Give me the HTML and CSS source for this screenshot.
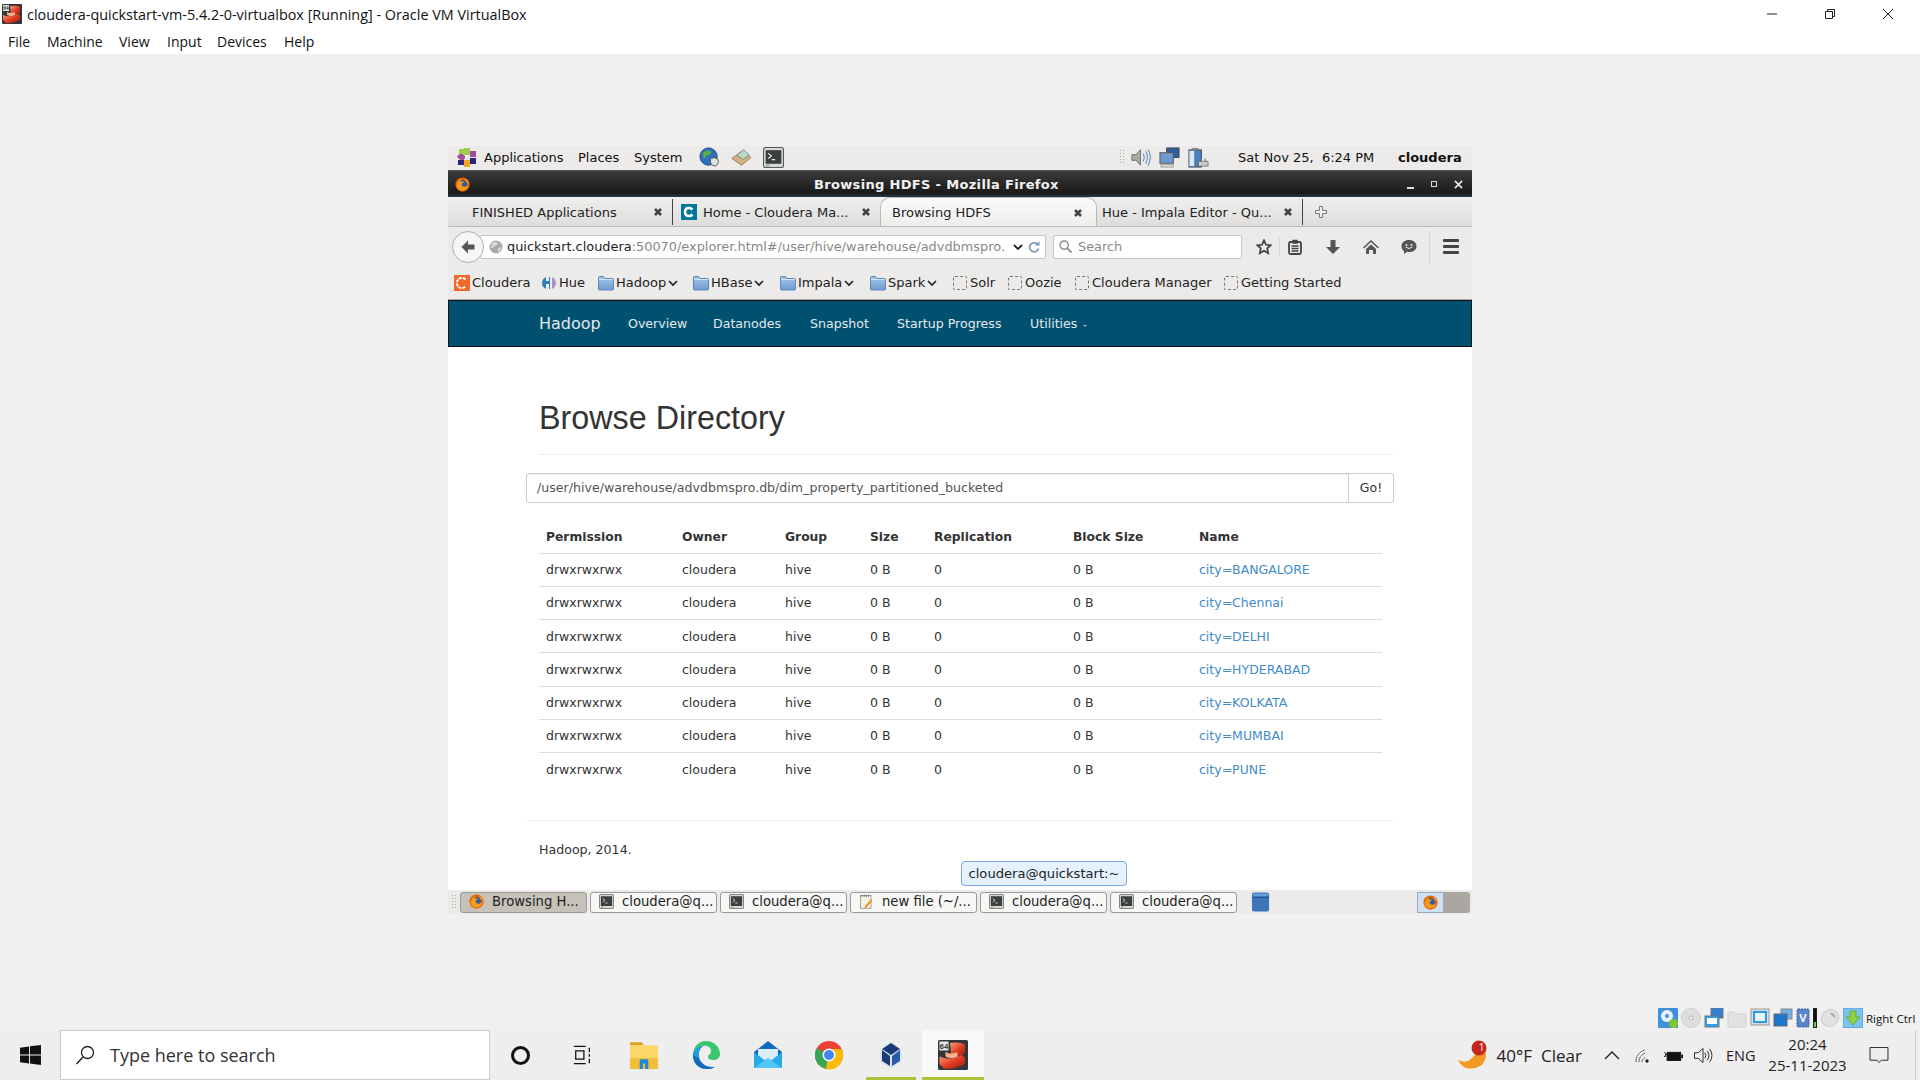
FILE: index.html
```html
<!DOCTYPE html>
<html lang="en">
<head>
<meta charset="utf-8">
<title>cloudera-quickstart-vm-5.4.2-0-virtualbox [Running] - Oracle VM VirtualBox</title>
<link rel="stylesheet" href="styles.css">
</head>
<body>
<svg class="defs" width="0" height="0" aria-hidden="true">
  <defs>
    <linearGradient id="fold" x1="0" y1="0" x2="0" y2="1"><stop offset="0" stop-color="#a8c6e8"/><stop offset="1" stop-color="#6f9cd0"/></linearGradient>
    <linearGradient id="vbred" x1="0" y1="0" x2="1" y2="1"><stop offset="0" stop-color="#f9a07a"/><stop offset=".55" stop-color="#e03a1e"/><stop offset="1" stop-color="#8e1f12"/></linearGradient>
    <symbol id="i-vbox" viewBox="0 0 20 20">
      <rect width="20" height="20" rx="1" fill="#33363b"/>
      <rect x="1" y="1" width="6" height="6" fill="#e8e8e8"/>
      <text x="4" y="6" font-size="5" font-weight="700" text-anchor="middle" fill="#333" font-family="Liberation Sans">64</text>
      <path d="M8 2q7-1 10 1v6q-4 3-9 2z" fill="url(#vbred)"/>
      <path d="M1 11q7 3 15-1l2 2v4q-7 4-14 3l-3-3z" fill="url(#vbred)"/>
      <path d="M5 8q4 2 8 0v3q-4 2-8 0z" fill="#ffb08c"/>
    </symbol>
    <symbol id="i-fx" viewBox="0 0 20 20">
      <circle cx="10" cy="10" r="9.5" fill="#e66000"/>
      <circle cx="10.5" cy="9.5" r="5.5" fill="#2d5fa6"/>
      <path d="M2 12q1-8 7-10-3 3-2 4 3-1 6 1-4 0-4 3 0 3 4 3 3 0 5-3-1 8-8 8-6 0-8-6z" fill="#f59a1b"/>
      <path d="M13 2q5 3 5.500 8-1-3-3-4z" fill="#ffcb3d"/>
    </symbol>
    <symbol id="i-term" viewBox="0 0 20 20">
      <rect x=".5" y=".5" width="19" height="19" rx="2" fill="#d8d8d4" stroke="#55585a"/>
      <rect x="2.500" y="3" width="15" height="13" fill="#3a3f40"/>
      <path d="M5 6l3 2.500-3 2.500M8.500 12h3" fill="none" stroke="#fff" stroke-width="1"/>
      <rect x="3" y="17" width="3" height="1.500" fill="#6cc04a"/>
    </symbol>
    <symbol id="i-folder" viewBox="0 0 16 16">
      <path d="M.5 14V2.500q0-1 1-1h4l1.500 2h7.500q1 0 1 1V14q0 1-1 1h-13q-1 0-1-1z" fill="url(#fold)" stroke="#5a87b8"/>
      <path d="M1 4.500h14" stroke="#d5e4f5"/>
    </symbol>
    <symbol id="i-x" viewBox="0 0 10 10">
      <path d="M2 2l6 6M8 2l-6 6" stroke="#444" stroke-width="2.600" fill="none"/>
    </symbol>
    <symbol id="i-chev" viewBox="0 0 10 10">
      <path d="M1 3l4 4 4-4" stroke="#222" stroke-width="1.700" fill="none"/>
    </symbol>
  </defs>
</svg>

<div class="app">
  <header class="titlebar">
    <svg class="app-icon" viewBox="0 0 20 20"><use href="#i-vbox"/></svg>
    <span class="title-text">cloudera-quickstart-vm-5.4.2-0-virtualbox [Running] - Oracle VM VirtualBox</span>
    <div class="win-ctrls">
      <svg class="wc" viewBox="0 0 12 12"><path d="M1 6h10" stroke="#222" fill="none"/></svg>
      <svg class="wc" viewBox="0 0 12 12"><path d="M1.500 3.500h7v7h-7zM3.500 3.500v-2h7v7h-2" stroke="#222" fill="none"/></svg>
      <svg class="wc" viewBox="0 0 12 12"><path d="M1 1l10 10M11 1L1 11" stroke="#222" fill="none"/></svg>
    </div>
  </header>
  <nav class="menubar">
    <span class="m-file">File</span><span class="m-machine">Machine</span><span class="m-view">View</span><span class="m-input">Input</span><span class="m-devices">Devices</span><span>Help</span>
  </nav>

  <main class="stage">
    <div class="vm">
      <div class="panel">
        <svg class="centos" viewBox="0 0 22 22">
          <rect x="2" y="8" width="7" height="6" fill="#a24e98" transform="rotate(45 5.500 11)"/>
          <rect x="8" y="2" width="6" height="7" fill="#9fcc4f"/>
          <rect x="14" y="5" width="6" height="6" fill="#a04e9a"/>
          <rect x="14" y="12" width="6" height="6" fill="#262577"/>
          <rect x="8" y="14" width="6" height="7" fill="#efa724"/>
          <rect x="3" y="3" width="5" height="5" fill="#9fcc4f"/>
          <rect x="2" y="14" width="6" height="5" fill="#262577"/>
          <rect x="9" y="9" width="4" height="4" fill="#eee"/>
        </svg>
        <span class="p-apps">Applications</span><span class="p-places">Places</span><span class="p-sys">System</span>
        <svg class="p-ic p-earth" viewBox="0 0 22 22"><circle cx="10" cy="10" r="9" fill="#2f6fc0" stroke="#1d3f78"/><path d="M4 6q5-4 9-1-1 4-5 4-1 3-3 3z" fill="#5fae3c"/><path d="M12 12q5-2 8 1 1 5-3 7-4 0-5-4z" fill="#dfe3e6" stroke="#555"/></svg>
        <svg class="p-ic p-mail" viewBox="0 0 22 22"><path d="M1 12L12 4l9 7-10 8z" fill="#d8b184" stroke="#86663f" stroke-width=".8"/><path d="M6 9l7-6 6 5-6 5z" fill="#bcd9c4" stroke="#5b7d8f" stroke-width=".8"/></svg>
        <svg class="p-ic p-term" viewBox="0 0 20 20"><use href="#i-term"/></svg>
        <span class="p-handle"></span>
        <svg class="p-ic p-spk" viewBox="0 0 22 22"><path d="M2 8h4l5-5v16l-5-5H2z" fill="#a9a9a4" stroke="#5d5d5a" stroke-width=".8"/><path d="M14 7q2 4 0 8M16.500 4.500q3.500 6.500 0 13M19 2.500q4.500 8.500 0 17" fill="none" stroke="#4b79b8" stroke-width="1"/></svg>
        <svg class="p-ic p-net" viewBox="0 0 22 22"><rect x="8" y="1" width="13" height="10" fill="#2f5f9e" stroke="#444"/><rect x="1" y="6" width="14" height="11" fill="#6d9bd0" stroke="#555"/><rect x="2" y="18" width="13" height="3" fill="#d8d8d4" stroke="#777" stroke-width=".6"/></svg>
        <svg class="p-ic p-bat" viewBox="0 0 22 22"><rect x="1" y="3" width="13" height="18" fill="#4a7fbd" stroke="#3d4c60"/><rect x="4" y="1" width="7" height="2" fill="#888"/><rect x="1.500" y="4" width="5" height="16" fill="#dbe8f5"/><path d="M11 15h10v5H11z" fill="#c9c9c5" stroke="#666" stroke-width=".8"/><path d="M14 12v3M18 12v3" stroke="#666"/></svg>
        <span class="p-date">Sat Nov 25,&nbsp; 6:24 PM</span>
        <b class="p-user">cloudera</b>
      </div>

      <div class="wm-title">
        <svg class="wm-fx" viewBox="0 0 20 20"><use href="#i-fx"/></svg>
        <span class="wm-text">Browsing HDFS - Mozilla Firefox</span>
        <span class="wm-min"></span><span class="wm-max"></span>
        <svg class="wm-close" viewBox="0 0 10 10"><path d="M1 1l8 8M9 1L1 9" stroke="#e8e8e8" stroke-width="1.800" fill="none"/></svg>
      </div>

      <div class="tabs">
        <div class="tab t1"><span class="tab-label">FINISHED Applications</span><svg class="tab-x" viewBox="0 0 10 10"><use href="#i-x"/></svg></div>
        <div class="tab t2">
          <svg class="tab-c" viewBox="0 0 16 16"><rect width="16" height="16" fill="#00789b"/><path d="M11.500 5.500Q10 4 8 4 4 4 4 8t4 4q2 0 3.500-1.500" fill="none" stroke="#fff" stroke-width="2.500"/></svg>
          <span class="tab-label">Home - Cloudera Ma...</span><svg class="tab-x" viewBox="0 0 10 10"><use href="#i-x"/></svg>
        </div>
        <div class="tab t3"><span class="tab-label">Browsing HDFS</span><svg class="tab-x" viewBox="0 0 10 10"><use href="#i-x"/></svg></div>
        <div class="tab t4"><span class="tab-label">Hue - Impala Editor - Qu...</span><svg class="tab-x" viewBox="0 0 10 10"><use href="#i-x"/></svg></div>
        <svg class="tab-plus" viewBox="0 0 12 12"><path d="M4.500.5h3v4h4v3h-4v4h-3v-4h-4v-3h4z" fill="#f2f2f0" stroke="#777"/></svg>
      </div>

      <div class="urlbar">
        <div class="back"><svg viewBox="0 0 16 16"><path d="M8 1.500L1.500 8 8 14.500V10.500h6.500v-5H8z" fill="#555"/></svg></div>
        <div class="url-box">
          <svg class="globe" viewBox="0 0 14 14"><circle cx="7" cy="7" r="6.500" fill="#a8a8a8"/><path d="M3 3q3-2 6 0-1 3-4 3-1 3-3 2zM9 8l3-1q0 4-3 5z" fill="#d9d9d9"/></svg>
          <span class="url-text"><span class="url-host">quickstart.cloudera</span>:50070/explorer.html#/user/hive/warehouse/advdbmspro.</span>
          <svg class="url-drop" viewBox="0 0 10 10"><path d="M1 3l4 4 4-4" stroke="#222" stroke-width="1.800" fill="none"/></svg>
          <svg class="url-reload" viewBox="0 0 12 12"><path d="M10 4A4.500 4.500 0 1 0 10.500 7.500" fill="none" stroke="#7f97b4" stroke-width="1.800"/><path d="M7 4.500h4.500V0z" fill="#7f97b4"/></svg>
        </div>
        <div class="search-box">
          <svg class="s-ic" viewBox="0 0 14 14"><circle cx="5.500" cy="5.500" r="4.500" fill="none" stroke="#8a8a8a" stroke-width="1.500"/><path d="M9 9l4.500 4.500" stroke="#8a8a8a" stroke-width="2"/></svg>
          <span>Search</span>
        </div>
        <svg class="tb tb-star" viewBox="0 0 18 18"><path d="M9 1.500l2.300 5 5.200.6-3.900 3.500 1.100 5.400L9 13.300 4.300 16l1.100-5.400L1.500 7.100l5.200-.6z" fill="none" stroke="#444" stroke-width="2"/></svg>
        <span class="tb-sep"></span>
        <svg class="tb tb-clip" viewBox="0 0 16 16"><rect x="2" y="3" width="12" height="12" rx="1.500" fill="none" stroke="#444" stroke-width="1.800"/><path d="M6 1.500h4V4H6zM4.500 7h7M4.500 9.500h7M4.500 12h7" stroke="#444" stroke-width="1.300" fill="#444"/></svg>
        <svg class="tb tb-down" viewBox="0 0 16 16"><path d="M5.500 1h5v7H15l-7 7-7-7h4.500z" fill="#555"/></svg>
        <svg class="tb tb-home" viewBox="0 0 16 16"><path d="M8 1L0 8.500l1 1L8 3l7 6.500 1-1zM3 10l5-4.500L13 10v5h-3v-4H6v4H3z" fill="#555"/></svg>
        <svg class="tb tb-chat" viewBox="0 0 16 16"><path d="M8 1c4.400 0 7.500 2.700 7.500 6.200S12.400 13 8 13c-.7 0-1.300 0-2-.2L3 15v-3C1.400 11 .5 9.300.5 7.200.5 3.700 3.600 1 8 1z" fill="#555"/><circle cx="5.500" cy="6" r="1" fill="#eee"/><circle cx="10.500" cy="6" r="1" fill="#eee"/><path d="M4.500 8q3.500 3 7 0" stroke="#eee" fill="none"/></svg>
        <span class="tb-sep tb-sep2"></span>
        <div class="hamb"><i></i><i></i><i></i></div>
      </div>

      <div class="bookmarks">
        <span class="bm bm-cl"><svg class="bi" viewBox="0 0 16 16"><rect width="16" height="16" fill="#f2682a"/><path d="M11.500 4.500Q10 3 8 3 3 3 3 8t5 5q2 0 3.500-1.500" fill="none" stroke="#fff" stroke-width="2" stroke-dasharray="3 1"/></svg>Cloudera</span>
        <span class="bm bm-hue"><svg class="bi" viewBox="0 0 16 16"><path d="M1 8q0-4 4-6v4h3V2h1v12H8v-5H5v5q-4-2-4-6z" fill="#2d7cc0"/><path d="M11 2q4 2 4 6t-4 6z" fill="#a894c8"/></svg>Hue</span>
        <span class="bm bm-had"><svg class="bi" viewBox="0 0 16 16"><use href="#i-folder"/></svg>Hadoop<svg class="chev" viewBox="0 0 10 10"><use href="#i-chev"/></svg></span>
        <span class="bm bm-hb"><svg class="bi" viewBox="0 0 16 16"><use href="#i-folder"/></svg>HBase<svg class="chev" viewBox="0 0 10 10"><use href="#i-chev"/></svg></span>
        <span class="bm bm-imp"><svg class="bi" viewBox="0 0 16 16"><use href="#i-folder"/></svg>Impala<svg class="chev" viewBox="0 0 10 10"><use href="#i-chev"/></svg></span>
        <span class="bm bm-sp"><svg class="bi" viewBox="0 0 16 16"><use href="#i-folder"/></svg>Spark<svg class="chev" viewBox="0 0 10 10"><use href="#i-chev"/></svg></span>
        <span class="bm bm-sol"><i class="dash"></i>Solr</span>
        <span class="bm bm-ooz"><i class="dash"></i>Oozie</span>
        <span class="bm bm-cm"><i class="dash"></i>Cloudera Manager</span>
        <span class="bm"><i class="dash"></i>Getting Started</span>
      </div>

      <nav class="hnav">
        <span class="brand">Hadoop</span>
        <span class="nl nl1">Overview</span><span class="nl nl2">Datanodes</span><span class="nl nl3">Snapshot</span><span class="nl nl4">Startup Progress</span><span class="nl">Utilities <i class="caret"></i></span>
      </nav>

      <section class="page">
        <h1 class="h1">Browse Directory</h1>
        <div class="h-rule"></div>
        <div class="path-group">
          <div class="path-input">/user/hive/warehouse/advdbmspro.db/dim_property_partitioned_bucketed</div>
          <div class="go">Go!</div>
        </div>
        <table class="tbl">
          <colgroup><col class="c1"><col class="c2"><col class="c3"><col class="c4"><col class="c5"><col class="c6"><col></colgroup>
          <thead><tr><th>Permission</th><th>Owner</th><th>Group</th><th>Size</th><th>Replication</th><th>Block Size</th><th>Name</th></tr></thead>
          <tbody>
            <tr><td>drwxrwxrwx</td><td>cloudera</td><td>hive</td><td>0 B</td><td>0</td><td>0 B</td><td class="lnk">city=BANGALORE</td></tr>
            <tr><td>drwxrwxrwx</td><td>cloudera</td><td>hive</td><td>0 B</td><td>0</td><td>0 B</td><td class="lnk">city=Chennai</td></tr>
            <tr><td>drwxrwxrwx</td><td>cloudera</td><td>hive</td><td>0 B</td><td>0</td><td>0 B</td><td class="lnk">city=DELHI</td></tr>
            <tr><td>drwxrwxrwx</td><td>cloudera</td><td>hive</td><td>0 B</td><td>0</td><td>0 B</td><td class="lnk">city=HYDERABAD</td></tr>
            <tr><td>drwxrwxrwx</td><td>cloudera</td><td>hive</td><td>0 B</td><td>0</td><td>0 B</td><td class="lnk">city=KOLKATA</td></tr>
            <tr><td>drwxrwxrwx</td><td>cloudera</td><td>hive</td><td>0 B</td><td>0</td><td>0 B</td><td class="lnk">city=MUMBAI</td></tr>
            <tr><td>drwxrwxrwx</td><td>cloudera</td><td>hive</td><td>0 B</td><td>0</td><td>0 B</td><td class="lnk">city=PUNE</td></tr>
          </tbody>
        </table>
        <div class="foot-rule"></div>
        <p class="footer">Hadoop, 2014.</p>
        <div class="tooltip">cloudera@quickstart:~</div>
      </section>

      <div class="vm-task">
        <span class="p-handle h2"></span>
        <div class="vt active"><svg class="vti" viewBox="0 0 20 20"><use href="#i-fx"/></svg><span>Browsing H...</span></div>
        <div class="vt"><svg class="vti" viewBox="0 0 20 20"><use href="#i-term"/></svg><span>cloudera@q...</span></div>
        <div class="vt"><svg class="vti" viewBox="0 0 20 20"><use href="#i-term"/></svg><span>cloudera@q...</span></div>
        <div class="vt"><svg class="vti" viewBox="0 0 20 20"><rect x="2" y="2" width="14" height="17" fill="#f4f1e2" stroke="#888"/><path d="M4 1v3M7 1v3M10 1v3M13 1v3" stroke="#555"/><path d="M8 16l8-9 2 2-8 9-3 1z" fill="#e8932a"/></svg><span>new file (~/...</span></div>
        <div class="vt"><svg class="vti" viewBox="0 0 20 20"><use href="#i-term"/></svg><span>cloudera@q...</span></div>
        <div class="vt"><svg class="vti" viewBox="0 0 20 20"><use href="#i-term"/></svg><span>cloudera@q...</span></div>
        <svg class="trash" viewBox="0 0 20 20"><path d="M1 2q0-2 2-2h14q2 0 2 2v16q0 2-2 2H3q-2 0-2-2z" fill="#3d75bd"/><path d="M1 5h18" stroke="#1f4a85"/><rect x="2" y="1" width="16" height="3" fill="#6b9bd6"/></svg>
        <div class="pager"><div class="pg-on"><svg class="vti" viewBox="0 0 20 20"><use href="#i-fx"/></svg></div></div>
      </div>
    </div>

    <div class="vb-status">
      <svg class="vs" viewBox="0 0 20 20"><rect width="20" height="20" rx="1" fill="#3f8fdc"/><circle cx="9" cy="8" r="6" fill="#e8f2fb"/><circle cx="9" cy="8" r="2" fill="#3f8fdc"/><circle cx="15.500" cy="15.500" r="4.500" fill="#7cc832"/></svg>
      <svg class="vs" viewBox="0 0 20 20"><circle cx="10" cy="10" r="9.500" fill="#dedede" stroke="#cfcfcf"/><circle cx="10" cy="10" r="2" fill="#f4f4f4" stroke="#bbb"/></svg>
      <svg class="vs" viewBox="0 0 20 20"><rect x="7" y="0" width="12" height="10" fill="#2f7fd0" stroke="#777"/><rect x="1" y="8" width="14" height="11" fill="#27a0ee" stroke="#777"/><rect x="3" y="10" width="10" height="6" fill="#fff"/></svg>
      <svg class="vs" viewBox="0 0 20 20"><path d="M1 5q0-1 1-1h5l2 2h9q1 0 1 1v11q0 1-1 1H2q-1 0-1-1z" fill="#e2e2e2" stroke="#d0d0d0"/></svg>
      <svg class="vs" viewBox="0 0 20 20"><rect x="1" y="1" width="18" height="16" fill="#dcdcdc" stroke="#999"/><rect x="3" y="3" width="14" height="12" fill="#2b9ae8"/><rect x="5" y="5" width="10" height="8" fill="#e8f4fd"/></svg>
      <svg class="vs" viewBox="0 0 20 20"><rect x="8" y="1" width="11" height="10" fill="#6fb0e8" stroke="#888"/><rect x="1" y="6" width="13" height="12" fill="#1c78cf" stroke="#666"/></svg>
      <svg class="vs vs-v" viewBox="0 0 14 20"><rect x="1" y="1" width="12" height="18" rx="1" fill="#5a84c8" stroke="#3a5fa0" stroke-dasharray="2 1"/><text x="7" y="14" font-size="11" font-weight="700" fill="#fff" text-anchor="middle" font-family="Liberation Sans">V</text></svg>
      <span class="vs-meter"></span>
      <svg class="vs" viewBox="0 0 20 20"><ellipse cx="10" cy="10" rx="9" ry="8" transform="rotate(-40 10 10)" fill="#e2e2e2" stroke="#c8c8c8"/><path d="M11 5l4 4" stroke="#aaa" stroke-width="2"/></svg>
      <svg class="vs" viewBox="0 0 20 20"><rect width="20" height="20" rx="1" fill="#7cc4f0" stroke="#4b95cf"/><path d="M7 3h6v6h4l-7 8-7-8h4z" fill="#8ed043" stroke="#5d9e22" stroke-width=".7"/></svg>
      <span class="right-ctrl">Right Ctrl</span>
    </div>
  </main>

  <footer class="taskbar">
    <div class="start"><svg class="win" viewBox="0 0 22 21"><path d="M0 3l9.500-1.500V10H0zM10.500 1.300L22 0v10H10.500zM0 11h9.500v8.500L0 18zM10.500 11H22v10l-11.500-1.700z" fill="#111"/></svg></div>
    <div class="ws-search">
      <svg class="ws-mag" viewBox="0 0 20 20"><circle cx="12.500" cy="7.500" r="6" fill="none" stroke="#222" stroke-width="1.300"/><path d="M8 12l-6.500 7" stroke="#222" stroke-width="1.500"/></svg>
      <span>Type here to search</span>
    </div>
    <div class="tk tk-cortana"><span class="cortana"></span></div>
    <div class="tk"><svg class="tk-ic-s" viewBox="0 0 22 22"><path d="M1 1.500h13M1 20.500h13M3 6.500h9v9H3zM18 3v5M18 10v3M18 15v5" fill="none" stroke="#111" stroke-width="1.400"/></svg></div>
    <div class="tk"><svg class="tk-ic" viewBox="0 0 28 28"><path d="M1 2h11l2 3H1z" fill="#e0a020"/><rect x="1" y="5" width="26" height="22" fill="#fad767"/><rect x="1" y="17" width="26" height="10" fill="#f4bd3a"/><path d="M10 27v-9h8v9h-3v-5h-2v5z" fill="#1f88d8"/></svg></div>
    <div class="tk"><svg class="tk-ic" viewBox="0 0 30 30"><path d="M15 1c8 0 14 6 14 13 0 4-3 6-7 6-3 0-5-1-5-3 0-3 3-2 3-6 0-3-3-6-8-5C6 7 3 10 2 14 3 6 8 1 15 1z" fill="#3cc66e"/><path d="M2 14c1-4 4-7 10-8-3 2-5 6-4 11 1 6 7 10 13 10 2 0 3 0 4-1-3 3-6 3-10 3C7 29 1 22 2 14z" fill="#0f6cbd"/><path d="M2 14c1-4 4-7 10-8-3 2-5 6-4 11-.5 1-4 1-6-3z" fill="#1b9de2"/></svg></div>
    <div class="tk"><svg class="tk-ic" viewBox="0 0 30 30"><path d="M15 1l14 11v16H1V12z" fill="#0f6cbd"/><path d="M5 9h20v9l-10 6-10-6z" fill="#d8eefb"/><path d="M1 12l14 11 14-11v16H1z" fill="#28a8ea"/><path d="M1 28l14-10 14 10z" fill="#50c8f5"/></svg></div>
    <div class="tk"><svg class="tk-ic" viewBox="0 0 30 30"><circle cx="15" cy="15" r="14" fill="#ea4335"/><path d="M15 15L3 8a14 14 0 0 0 9 21z" fill="#34a853"/><path d="M15 9h12.500a14 14 0 0 1-15.500 20z" fill="#fbbc05"/><circle cx="15" cy="15" r="6.500" fill="#fff"/><circle cx="15" cy="15" r="5" fill="#4285f4"/></svg></div>
    <div class="tk run"><svg class="tk-ic" viewBox="0 0 30 30"><path d="M15 1l11 8v13l-11 7-11-7V9z" fill="#dfe5ef"/><path d="M15 3l9 6-9 6-9-6z" fill="#1c3c78"/><path d="M6 10l8 6v10l-8-5z" fill="#1c3c78"/><path d="M24 10l-8 6v10l8-5z" fill="#2b5aa8"/></svg></div>
    <div class="tk run open"><svg class="tk-ic" viewBox="0 0 20 20"><use href="#i-vbox"/></svg></div>
    <div class="tray">
      <div class="wx">
        <svg class="wx-ic" viewBox="0 0 30 30"><path d="M0 20q8 4 13-1 5-4 5-9 5 1 9 0 3 8-3 15-8 5-16 3-5-2-8-8z" fill="#f39a23"/><circle cx="21" cy="8" r="7.500" fill="#c4281c"/></svg>
        <span class="wx-n">1</span>
      </div>
      <span class="tmp">40°F</span><span class="clr">Clear</span>
      <svg class="tr-chev" viewBox="0 0 16 9"><path d="M1 8l7-7 7 7" fill="none" stroke="#222" stroke-width="1.300"/></svg>
      <svg class="tr-wifi" viewBox="0 0 16 16"><path d="M1 15q0-9 9-12M4 15q0-6 6-9M7 15q0-3 3-4" fill="none" stroke="#333" stroke-width="1" stroke-dasharray="1.500 .5"/><circle cx="12" cy="14" r="1.700" fill="#222"/></svg>
      <svg class="tr-bat" viewBox="0 0 22 14"><path d="M1 3l2 2v3H1M3 6h2" stroke="#111" fill="none"/><rect x="4.500" y="3.500" width="15" height="9" fill="#111" stroke="#111"/><rect x="20" y="6" width="2" height="4" fill="#111"/></svg>
      <svg class="tr-vol" viewBox="0 0 20 18"><path d="M1 6h4l5-4.500v15L5 12H1z" fill="none" stroke="#222"/><path d="M12 6q2 3 0 6M14.500 4q3.500 5 0 10M17 2q5 7 0 14" fill="none" stroke="#222"/></svg>
      <span class="eng">ENG</span>
      <div class="clock"><span>20:24</span><span>25-11-2023</span></div>
      <svg class="notif" viewBox="0 0 20 18"><path d="M.5.500h19v13.500h-7L10 16.500 8 14H.5z" fill="none" stroke="#222"/></svg>
      <span class="show-desk"></span>
    </div>
  </footer>
</div>
</body>
</html>
```

FILE: styles.css
```css
* { box-sizing: border-box; }
html, body { margin: 0; height: 100%; }
body { background: #f0f0f0; font-family: "Open Sans", sans-serif; overflow: hidden; color: #111; }
.defs { position: absolute; }
svg { display: block; flex: none; }
.app { width: 1920px; height: 1080px; display: flex; flex-direction: column; }

/* VirtualBox window chrome */
.titlebar { height: 29px; background: #fff; display: flex; align-items: center; padding: 0 0 1px 2px; flex: none; }
.app-icon { width: 20px; height: 20px; }
.title-text { margin-left: 5px; font: 14.400px "Open Sans", sans-serif; color: #111; }
.win-ctrls { margin-left: auto; display: flex; gap: 46px; padding-right: 26px; }
.wc { width: 12px; height: 12px; }
.menubar { height: 25px; background: #fff; display: flex; align-items: center; padding-left: 8px; font-size: 14px; flex: none; }
.m-file { width: 39px; } .m-machine { width: 72px; } .m-view { width: 48px; } .m-input { width: 50px; } .m-devices { width: 67px; }

.stage { flex: 1; display: flex; flex-direction: column; align-items: center; padding-top: 92px; min-height: 0; }
.vm { width: 1024px; height: 768px; display: flex; flex-direction: column; font-family: "DejaVu Sans", sans-serif; position: relative; flex: none; }

/* guest panel */
.panel { height: 24px; background: #ecebe9; display: flex; align-items: center; font-size: 13px; color: #111; padding: 0 0 2px 8px; flex: none; }
.centos { width: 22px; height: 22px; }
.p-apps { margin-left: 6px; width: 94px; } .p-places { width: 56px; } .p-sys { width: 65px; }
.p-ic { width: 21px; height: 21px; }
.p-mail { margin-left: 11px; } .p-term { margin-left: 11px; }
.p-handle { width: 5px; height: 16px; margin-left: 335px; margin-right: 6px; background: radial-gradient(circle, #aaa 1px, transparent 1px) 0 0 / 3px 3px; }
.p-net, .p-bat { margin-left: 8px; }
.p-date { margin-left: 29px; width: 160px; }
.p-user { font-weight: 700; }

.wm-title { height: 27px; background: linear-gradient(#3b3b3b, #1a1a1a 85%, #2c3a44); border-top: 1px solid #555; display: flex; align-items: center; padding-left: 7px; color: #f2f2f2; flex: none; }
.wm-fx { width: 15px; height: 15px; }
.wm-text { margin-left: 344px; font-weight: 700; font-size: 13px; width: 593px; letter-spacing: .33px; }
.wm-min { width: 7px; height: 2px; background: #ddd; margin-top: 8px; }
.wm-max { width: 6px; height: 6px; border: 1px solid #ddd; margin-left: 17px; }
.wm-close { width: 9px; height: 9px; margin-left: 17px; }

.tabs { height: 30px; background: linear-gradient(#efefee, #dedddb); border-bottom: 1px solid #b8b8b4; display: flex; align-items: center; font-size: 13px; color: #222; flex: none; }
.tab { height: 29px; display: flex; align-items: center; position: relative; }
.tab-x { width: 10px; height: 10px; position: absolute; right: 9px; top: 10px; }
.t1 { width: 225px; padding: 1px 0 0 24px; border-right: 1px solid #444; height: 26px; }
.t1 .tab-x { top: 8px; }
.t2 { width: 207px; padding: 1px 0 0 8px; }
.tab-c { width: 16px; height: 16px; margin-right: 6px; }
.t3 { width: 217px; padding-left: 11px; background: linear-gradient(#fafafa, #ededec); border: 1px solid #b8b8b4; border-bottom: none; border-radius: 10px 10px 0 0; }
.t3 .tab-x { right: 13px; }
.t4 { width: 206px; padding: 1px 0 0 5px; border-right: 1px solid #444; height: 26px; }
.t4 .tab-x { right: 9px; top: 8px; }
.tab-plus { width: 12px; height: 12px; margin-left: 12px; }

.urlbar { height: 38px; background: #ecebe9; display: flex; align-items: center; padding: 1px 0 0 4px; flex: none; font-size: 12.900px; position: relative; }
.back { width: 32px; height: 32px; border-radius: 50%; background: #f6f6f5; border: 1px solid #b0b0ac; display: flex; align-items: center; justify-content: center; position: relative; z-index: 1; }
.back svg { width: 16px; height: 16px; }
.url-box { margin-left: -4px; width: 566px; height: 24px; background: #fff; border: 1px solid #c5c5c0; border-radius: 2px; display: flex; align-items: center; padding-left: 8px; }
.globe { width: 14px; height: 14px; }
.url-text { margin-left: 4px; color: #888; white-space: nowrap; width: 502px; overflow: hidden; font-size: 12.900px; }
.url-host { color: #222; }
.url-drop { width: 10px; height: 10px; margin-left: 4px; }
.url-reload { width: 12px; height: 12px; margin-left: 5px; }
.search-box { margin-left: 7px; width: 189px; height: 24px; background: #fff; border: 1px solid #c5c5c0; border-radius: 2px; display: flex; align-items: center; padding-left: 5px; color: #8a8a8a; gap: 6px; }
.s-ic { width: 13px; height: 13px; }
.tb { width: 16px; height: 16px; }
.tb-star { margin-left: 14px; }
.tb-sep { width: 1px; height: 18px; background: #d5d5d2; margin-left: 7px; }
.tb-sep2 { height: 34px; margin-left: 12px; }
.tb-clip { margin-left: 7px; } .tb-down, .tb-home, .tb-chat { margin-left: 22px; }
.hamb { margin-left: 13px; display: flex; flex-direction: column; gap: 3px; width: 16px; }
.hamb i { display: block; height: 3px; background: #444; border-radius: 1px; }

.bookmarks { height: 35px; background: #ecebe9; border-bottom: 1px solid #a9a9a6; display: flex; align-items: center; padding: 1px 0 0 6px; font-size: 13px; color: #222; flex: none; }
.bm { display: flex; align-items: center; flex: none; white-space: nowrap; }
.bi { width: 16px; height: 16px; margin-right: 2px; }
.chev { width: 10px; height: 10px; margin-left: 2px; }
.dash { width: 14px; height: 14px; border: 1px dashed #777; border-radius: 2px; margin-right: 3px; }
.bm-cl { width: 87px; } .bm-hue { width: 57px; } .bm-had { width: 95px; } .bm-hb { width: 87px; } .bm-imp { width: 90px; } .bm-sp { width: 83px; } .bm-sol { width: 55px; } .bm-ooz { width: 67px; } .bm-cm { width: 149px; }

.hnav { height: 47px; background: #00506f; border: 1px solid #111; display: flex; align-items: center; padding-left: 90px; color: #e3e9ee; font-size: 12.600px; flex: none; }
.brand { font-size: 16px; width: 89px; }
.nl1 { width: 85px; } .nl2 { width: 97px; } .nl3 { width: 87px; } .nl4 { width: 133px; }
.caret { display: inline-block; border: 2.500px solid transparent; border-top-color: #9fb5c2; margin-left: 2px; vertical-align: -1px; }

/* page content */
.page { flex: 1; background: #fff; position: relative; padding: 0 78px; min-height: 0; font-size: 12.500px; color: #333; }
.h1 { font: 400 32.300px/40px "Liberation Sans", sans-serif; color: #333; margin: 51px 0 0 13px; padding: 0; }
.h-rule { height: 1px; background: #eee; margin: 16px 0 0 13px; }
.path-group { display: flex; margin-top: 18px; height: 30px; }
.path-input { flex: 1; border: 1px solid #ccc; border-radius: 3px 0 0 3px; padding-left: 10px; line-height: 28px; color: #555; font-size: 12.600px; box-shadow: inset 0 1px 1px rgba(0,0,0,.07); }
.go { width: 45px; border: 1px solid #ccc; border-left: 0; border-radius: 0 3px 3px 0; text-align: center; line-height: 28px; color: #333; font-size: 12.500px; }
.tbl { border-collapse: collapse; table-layout: fixed; width: 843px; margin: 18px 0 0 13px; }
.c1 { width: 136px; } .c2 { width: 103px; } .c3 { width: 85px; } .c4 { width: 64px; } .c5 { width: 139px; } .c6 { width: 126px; }
.tbl th { text-align: left; font-weight: 700; font-size: 12.300px; padding: 0 7px; height: 32px; border-bottom: 1px solid #ddd; }
.tbl td { font-size: 12.500px; padding: 0 7px; height: 33.250px; border-bottom: 1px solid #ddd; }
.tbl tr:last-child td { border-bottom: 0; }
.lnk { color: #428bca; }
.foot-rule { height: 1px; background: #eee; margin: 34px 0 0; }
.footer { margin: 21px 0 0 13px; font-size: 12.600px; }
.tooltip { position: absolute; left: 513px; top: 514px; width: 166px; height: 25px; background: #e5f2fd; border: 1px solid #7ea6dc; border-radius: 4px; text-align: center; line-height: 23px; font-size: 13.100px; color: #222; }

/* guest taskbar */
.vm-task { height: 24px; background: #ecebe9; display: flex; align-items: center; padding-right: 2px; gap: 3px; font-size: 13.200px; color: #222; flex: none; }
.h2 { margin: 0 1px 0 3px; }
.vt { width: 127px; height: 21px; border: 1px solid #9a9a96; border-radius: 3px; background: #f7f7f6; display: flex; align-items: center; padding: 0 0 2px 8px; gap: 8px; white-space: nowrap; }
.vt.active { background: #c6c2ba; }
.vti { width: 15px; height: 15px; }
.trash { width: 19px; height: 20px; margin-left: 11px; }
.pager { margin-left: auto; width: 53px; height: 21px; background: #aaa7a1; border-radius: 3px; }
.pg-on { width: 27px; height: 21px; background: #cfe0f4; border: 1px solid #9ab; display: flex; align-items: center; justify-content: center; }

/* status icons above the host taskbar */
.vb-status { margin-top: auto; width: 100%; display: flex; justify-content: flex-end; align-items: center; gap: 3px; height: 22px; padding-bottom: 2px; }
.vs { width: 20px; height: 20px; }
.vs-v { width: 14px; }
.vs-meter { width: 4px; height: 20px; background: linear-gradient(#111 75%, #5fd03a 75%); border: 1px solid #222; }
.right-ctrl { font: 11.500px "Open Sans", sans-serif; color: #111; white-space: nowrap; width: 54px; }

/* host taskbar */
.taskbar { height: 50px; background: #eee; display: flex; align-items: stretch; flex: none; }
.start { width: 60px; display: flex; align-items: center; justify-content: center; }
.win { width: 21px; height: 20px; }
.ws-search { width: 430px; background: #fff; border: 1px solid #ccc; display: flex; align-items: center; padding-left: 14px; font: 18px "Open Sans", sans-serif; color: #333; gap: 15px; }
.ws-mag { width: 20px; height: 20px; }
.tk { width: 61.700px; display: flex; align-items: center; justify-content: center; position: relative; }
.cortana { width: 19px; height: 19px; border: 3px solid #111; border-radius: 50%; }
.tk-ic-s { width: 20px; height: 20px; }
.tk-ic { width: 30px; height: 30px; }
.run::after { content: ""; position: absolute; left: 6px; right: 6px; bottom: 0; height: 3px; background: #a8c43a; }
.open { background: #f8f8f8; }
.open::after { left: 0; right: 0; }
.tray { flex: 1; display: flex; align-items: center; position: relative; font: 17px "Open Sans", sans-serif; color: #222; padding-left: 474px; }
.wx { width: 30px; height: 30px; position: relative; flex: none; }
.wx-ic { width: 30px; height: 30px; }
.wx-n { position: absolute; right: 3px; top: 0; font-size: 10px; line-height: 15px; color: #fff; }
.tmp { margin-left: 9px; } .clr { margin-left: 9px; }
.tr-chev { width: 16px; height: 9px; margin-left: 22px; }
.tr-wifi { width: 16px; height: 16px; margin-left: 15px; }
.tr-bat { width: 20px; height: 13px; margin-left: 12px; }
.tr-vol { width: 20px; height: 17px; margin-left: 10px; }
.eng { margin-left: 13px; font-size: 14.500px; }
.clock { margin-left: 7px; width: 90px; display: flex; flex-direction: column; align-items: center; font-size: 15px; line-height: 21px; flex: none; }
.notif { width: 20px; height: 17px; margin-left: 17px; }
.show-desk { position: absolute; right: 4px; top: 0; bottom: 0; width: 1px; background: #ccc; }
```
